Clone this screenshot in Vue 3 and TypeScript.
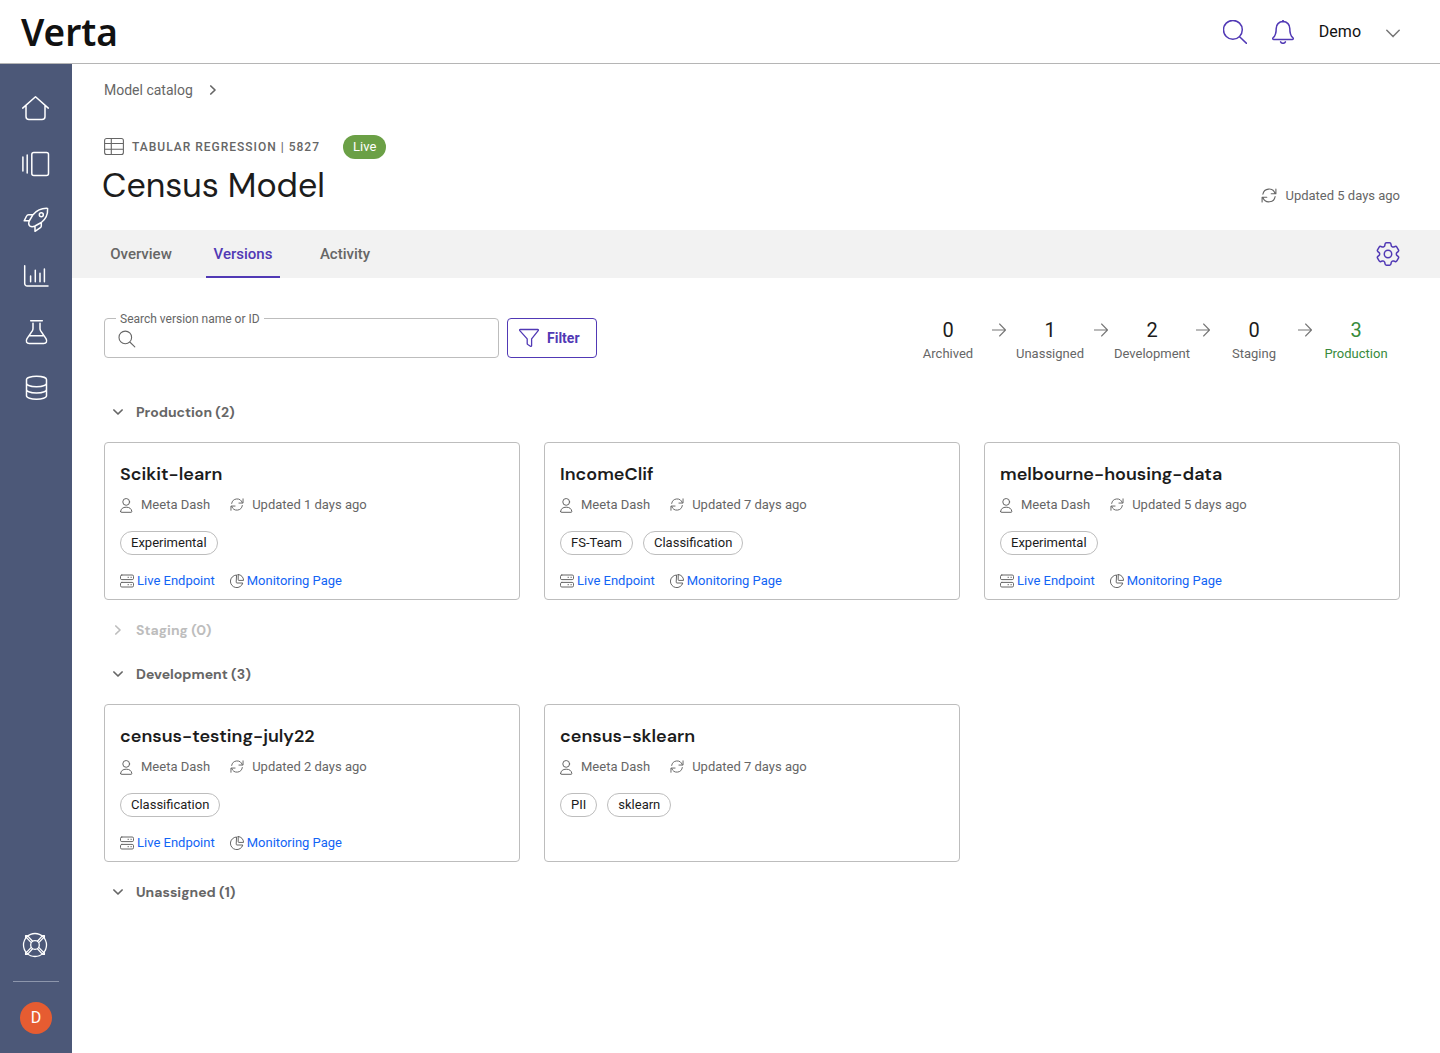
<script setup lang="ts">
import { h, ref, type FunctionalComponent } from 'vue'

interface IconShape {
  box: string
  width: number
  height: number
  d: string
  stroke?: number
}

interface Version {
  name: string
  owner: string
  updated: string
  tags: string[]
  live: boolean
}

interface StageGroup {
  title: string
  open: boolean
  empty?: boolean
  versions: Version[]
}

const icons: Record<string, IconShape> = {
  home: {
    box: '0 0 28 28', width: 28, height: 28,
    d: 'M.7 14.1 13.5 2.8l12.8 11.3M4 11.5V22.5a3 3 0 0 0 3 3h13a3 3 0 0 0 3-3V11.5',
  },
  catalog: {
    box: '0 0 28 28', width: 28, height: 28,
    d: 'M.9 7v14M5.2 5v18M11.8 2.5h12.7a2 2 0 0 1 2 2v19a2 2 0 0 1-2 2H11.8a2 2 0 0 1-2-2v-19a2 2 0 0 1 2-2Z',
  },
  rocket: {
    box: '0 0 28 28', width: 28, height: 28,
    d: 'M25.6 2.4C18.5 2 14.2 5 11 8.7L7.5 14.5C6.3 17 6.6 19 8 20.1c1.4 1 3 .8 5-.1l6.3-3.5C24 13 26 9 25.6 2.4ZM11 8.7H6.6c-1 0-1.6.4-2 1.3L2.2 14.8h5.2M19.3 16.5v3.6c0 .7-.3 1.2-.9 1.5L13 25.3V20M21.3 8.7a2 2 0 1 1-4 0 2 2 0 0 1 4 0Z',
  },
  chart: {
    box: '0 0 28 28', width: 28, height: 28,
    d: 'M2.7 3.7v17.8a2.5 2.5 0 0 0 2.5 2.5H26M8.6 14v5.7M13.3 8.3v11.4M18 11.3v8.4M22.4 7v12.7',
  },
  flask: {
    box: '0 0 28 28', width: 28, height: 28,
    d: 'M8.7 2.7h11.6M11 5.3v5.2c0 .8-.2 1.6-.7 2.4L5 20.7c-1.6 2.7-.3 4.8 2.3 4.8h14.4c2.6 0 3.9-2.1 2.3-4.8l-5.3-7.8c-.5-.8-.7-1.6-.7-2.4V5.3M7 17.7h15',
  },
  database: {
    box: '0 0 28 28', width: 28, height: 28,
    d: 'M4.5 5.6c0-1.9 4.5-3.3 10-3.3s10 1.4 10 3.3v16.2c0 2-4.5 3.5-10 3.5s-10-1.5-10-3.5ZM4.5 9.3c0 2 4.5 3.4 10 3.4s10-1.4 10-3.4M4.5 15.6c0 2 4.5 3.4 10 3.4s10-1.4 10-3.4',
  },
  lifebuoy: {
    box: '1 0 28 28', width: 28, height: 28,
    d: 'M25.5 14a11.5 11.5 0 1 1-23 0 11.5 11.5 0 0 1 23 0ZM18.3 14a4.3 4.3 0 1 1-8.6 0 4.3 4.3 0 0 1 8.6 0ZM4.6 6.4V4.6h1.8L11.6 10.2M4.6 5.6 10.2 11.6M23.4 6.4V4.6h-1.8L16.4 10.2M23.4 5.6 17.8 11.6M4.6 21.6v1.8h1.8L11.6 17.8M4.6 22.4 10.2 16.4M23.4 21.6v1.8h-1.8L16.4 17.8M23.4 22.4 17.8 16.4',
    stroke: 1.3,
  },
  search: {
    box: '0 0 24 24', width: 24, height: 24,
    d: 'M19.3 9.8a9.4 9.4 0 1 1-18.8 0 9.4 9.4 0 0 1 18.8 0ZM16.6 16.7l7 6.8',
  },
  bell: {
    box: '0 0 24 24', width: 24, height: 24,
    d: 'M12 .6v1M12 1.6c-4.2 0-6.8 3.1-6.8 6.8 0 5.3-.8 7.3-2.9 9.1-1 .9-.6 2 .5 2h18.4c1.1 0 1.5-1.1.5-2-2.1-1.8-2.9-3.8-2.9-9.1 0-3.7-2.6-6.8-6.8-6.8ZM9.6 21.9c.5 1 1.4 1.4 2.4 1.4s1.9-.4 2.4-1.4',
  },
  wideChevron: { box: '0 0 14 14', width: 14, height: 14, d: 'M.8 5.2 7 11.6l6.2-6.4', stroke: 1.5 },
  chevronRight: { box: '0 0 12 12', width: 12, height: 12, d: 'M3.8 2 8 6l-4.2 4', stroke: 1.7 },
  chevronDown: { box: '0 0 12 12', width: 12, height: 12, d: 'M1.9 4 6 8l4.1-4', stroke: 1.7 },
  table: {
    box: '0 0 20 20', width: 20, height: 20,
    d: 'M2.6 1.5h14.8a2 2 0 0 1 2 2v12a2 2 0 0 1-2 2H2.6a2 2 0 0 1-2-2v-12a2 2 0 0 1 2-2ZM7.3 1.5v16M.6 6.5h18.8M.6 12.2h18.8',
    stroke: 1.1,
  },
  refresh: {
    box: '0 0 16 16', width: 16, height: 16,
    d: 'M1.9 6.2A6.3 6.3 0 0 1 14 5.2M14.9 1v4.8H10.2M14.1 8.6A6.3 6.3 0 0 1 2 9.8M1.1 14v-4.8H5.8',
    stroke: 1.1,
  },
  gear: {
    box: '2.3 2.3 19.4 19.4', width: 24, height: 24,
    d: 'M9.594 3.94c.09-.542.56-.94 1.11-.94h2.593c.55 0 1.02.398 1.11.94l.213 1.281c.063.374.313.686.645.87.074.04.147.083.22.127.325.196.72.257 1.075.124l1.217-.456a1.125 1.125 0 0 1 1.37.49l1.296 2.247a1.125 1.125 0 0 1-.26 1.431l-1.003.827c-.293.241-.438.613-.43.992a7.723 7.723 0 0 1 0 .255c-.008.378.137.75.43.991l1.004.827c.424.35.534.955.26 1.43l-1.298 2.247a1.125 1.125 0 0 1-1.369.491l-1.217-.456c-.355-.133-.75-.072-1.076.124a6.47 6.47 0 0 1-.22.128c-.331.183-.581.495-.644.869l-.213 1.281c-.09.543-.56.94-1.11.94h-2.594c-.55 0-1.019-.398-1.11-.94l-.213-1.281c-.062-.374-.312-.686-.644-.87a6.52 6.52 0 0 1-.22-.127c-.325-.196-.72-.257-1.076-.124l-1.217.456a1.125 1.125 0 0 1-1.369-.49l-1.297-2.247a1.125 1.125 0 0 1 .26-1.431l1.004-.827c.292-.24.437-.613.43-.991a6.932 6.932 0 0 1 0-.255c.007-.38-.138-.751-.43-.992l-1.004-.827a1.125 1.125 0 0 1-.26-1.43l1.297-2.247a1.125 1.125 0 0 1 1.37-.491l1.216.456c.356.133.751.072 1.076-.124.072-.044.146-.086.22-.128.332-.183.582-.495.644-.869l.214-1.28ZM15 12a3 3 0 1 1-6 0 3 3 0 0 1 6 0Z',
    stroke: 1.2,
  },
  smallSearch: {
    box: '0 0 18 18', width: 18, height: 18,
    d: 'M13.6 7.4a6.3 6.3 0 1 1-12.6 0 6.3 6.3 0 0 1 12.6 0ZM11.8 12l5 4.8',
    stroke: 1.1,
  },
  funnel: {
    box: '0 0 20 20', width: 20, height: 20,
    d: 'M1.3 1.5h17.4c.7 0 .9.6.5 1.1l-6.6 8.3v6.5c0 .9-.5 1.3-1.2.9l-2.6-1.8c-.4-.3-.6-.6-.6-1.1v-4.5L.8 2.6c-.4-.5-.2-1.1.5-1.1Z',
    stroke: 1.3,
  },
  arrow: { box: '0 0 14 14', width: 14, height: 14, d: 'M0 7h13.4M7.6 1l5.9 6-5.9 6', stroke: 1.1 },
  user: {
    box: '0 0 13 15', width: 13, height: 15,
    d: 'M9.6 3.9a3.4 3.4 0 1 1-6.8 0 3.4 3.4 0 0 1 6.8 0ZM.6 13.6c.2-2.9 2.3-4.4 5.6-4.4s5.4 1.5 5.6 4.4c0 .5-.2.7-.6.7H1.2c-.4 0-.6-.2-.6-.7Z',
    stroke: 1,
  },
  server: {
    box: '0 0 14 14', width: 14, height: 14,
    d: 'M1.8 1h10.4a1.3 1.3 0 0 1 1.3 1.3v2a1.3 1.3 0 0 1-1.3 1.3H1.8A1.3 1.3 0 0 1 .5 4.3v-2A1.3 1.3 0 0 1 1.8 1ZM1.8 8.4h10.4a1.3 1.3 0 0 1 1.3 1.3v2a1.3 1.3 0 0 1-1.3 1.3H1.8a1.3 1.3 0 0 1-1.3-1.3v-2a1.3 1.3 0 0 1 1.3-1.3ZM8 3.3h.5M10.9 3.3h.5M8 10.7h.5M10.9 10.7h.5',
    stroke: 1,
  },
  pie: {
    box: '0 0 14 14', width: 14, height: 14,
    d: 'M6.2 1A6.3 6.3 0 1 0 12.8 9H6.9c-.5 0-.7-.3-.7-.7ZM8.2.5v5.3c0 .4.2.6.6.6h4.8C13.4 3.2 11.4.8 8.2.5Z',
    stroke: 1,
  },
}

const Icon: FunctionalComponent<{ name: string }> = (props) => {
  const icon = icons[props.name]
  return h('svg', {
    class: 'icon',
    viewBox: icon.box,
    width: icon.width,
    height: icon.height,
    fill: 'none',
    stroke: 'currentColor',
    'stroke-width': icon.stroke ?? 1.5,
    'stroke-linecap': 'round',
    'stroke-linejoin': 'round',
    'aria-hidden': 'true',
  }, [h('path', { d: icon.d })])
}
Icon.props = ['name']

const navItems = [
  { icon: 'home', label: 'Home' },
  { icon: 'catalog', label: 'Catalog' },
  { icon: 'rocket', label: 'Deployments' },
  { icon: 'chart', label: 'Monitoring' },
  { icon: 'flask', label: 'Experiments' },
  { icon: 'database', label: 'Datasets' },
]

const tabs = ['Overview', 'Versions', 'Activity']
const activeTab = ref('Versions')
const query = ref('')

const stages = [
  { label: 'Archived', count: 0 },
  { label: 'Unassigned', count: 1 },
  { label: 'Development', count: 2 },
  { label: 'Staging', count: 0 },
  { label: 'Production', count: 3 },
]

const groups = ref<StageGroup[]>([
  {
    title: 'Production (2)',
    open: true,
    versions: [
      { name: 'Scikit-learn', owner: 'Meeta Dash', updated: 'Updated 1 days ago', tags: ['Experimental'], live: true },
      { name: 'IncomeClif', owner: 'Meeta Dash', updated: 'Updated 7 days ago', tags: ['FS-Team', 'Classification'], live: true },
      { name: 'melbourne-housing-data', owner: 'Meeta Dash', updated: 'Updated 5 days ago', tags: ['Experimental'], live: true },
    ],
  },
  { title: 'Staging (0)', open: false, empty: true, versions: [] },
  {
    title: 'Development (3)',
    open: true,
    versions: [
      { name: 'census-testing-july22', owner: 'Meeta Dash', updated: 'Updated 2 days ago', tags: ['Classification'], live: true },
      { name: 'census-sklearn', owner: 'Meeta Dash', updated: 'Updated 7 days ago', tags: ['PII', 'sklearn'], live: false },
    ],
  },
  { title: 'Unassigned (1)', open: true, versions: [] },
])
</script>

<template>
  <div class="app">
    <header class="topbar">
      <a class="logo" href="#">Verta</a>
      <div class="topbar-actions">
        <button class="plain accent" type="button" aria-label="Search"><Icon name="search" /></button>
        <button class="plain accent" type="button" aria-label="Notifications"><Icon name="bell" /></button>
        <button class="plain account" type="button">Demo <Icon name="wideChevron" /></button>
      </div>
    </header>

    <div class="body">
      <aside class="sidebar">
        <nav class="side-nav" aria-label="Main">
          <a v-for="item in navItems" :key="item.icon" class="side-link" href="#" :aria-label="item.label">
            <Icon :name="item.icon" />
          </a>
        </nav>
        <div class="side-foot">
          <a class="help" href="#" aria-label="Help"><Icon name="lifebuoy" /></a>
          <button class="avatar" type="button" aria-label="D, account">D</button>
        </div>
      </aside>

      <main class="main">
        <section class="model-head">
          <nav class="crumbs" aria-label="Breadcrumb">
            <a href="#">Model catalog</a>
            <Icon name="chevronRight" />
          </nav>
          <div class="kind">
            <Icon name="table" />
            <span class="kind-text">TABULAR REGRESSION | 5827</span>
            <span class="live">Live</span>
          </div>
          <div class="title-row">
            <h1>Census Model</h1>
            <p class="updated"><Icon name="refresh" />Updated 5 days ago</p>
          </div>
        </section>

        <div class="tabbar">
          <div class="tabs" role="tablist">
            <div v-for="tab in tabs" :key="tab" class="tab-slot" role="presentation">
              <button
                class="tab"
                :class="{ active: tab === activeTab }"
                type="button"
                role="tab"
                :aria-selected="tab === activeTab"
                @click="activeTab = tab"
              >{{ tab }}</button>
            </div>
          </div>
          <button class="plain accent" type="button" aria-label="Settings"><Icon name="gear" /></button>
        </div>

        <div class="content">
          <div class="toolbar">
            <div class="search">
              <label for="version-search">Search version name or ID</label>
              <Icon name="smallSearch" />
              <input id="version-search" v-model="query" type="text" />
            </div>
            <button class="filter" type="button"><Icon name="funnel" />Filter</button>
            <ol class="stages">
              <template v-for="(stage, i) in stages" :key="stage.label">
                <li v-if="i > 0" class="stage-arrow" aria-hidden="true"><Icon name="arrow" /></li>
                <li class="stage" :class="{ current: i === stages.length - 1 }">
                  <span class="count">{{ stage.count }}</span>
                  <span class="stage-name">{{ stage.label }}</span>
                </li>
              </template>
            </ol>
          </div>

          <section v-for="group in groups" :key="group.title">
            <h2>
              <button
                class="group-toggle"
                :class="{ empty: group.empty }"
                type="button"
                :aria-expanded="group.open"
                @click="group.open = !group.open"
              >
                <Icon :name="group.open ? 'chevronDown' : 'chevronRight'" />{{ group.title }}
              </button>
            </h2>
            <div v-if="group.open && group.versions.length" class="cards">
              <article v-for="version in group.versions" :key="version.name" class="card">
                <h3>{{ version.name }}</h3>
                <p class="meta">
                  <span class="owner"><Icon name="user" />{{ version.owner }}</span>
                  <span class="when"><Icon name="refresh" />{{ version.updated }}</span>
                </p>
                <ul class="tags">
                  <li v-for="tag in version.tags" :key="tag">{{ tag }}</li>
                </ul>
                <div v-if="version.live" class="links">
                  <a href="#"><Icon name="server" />Live Endpoint</a>
                  <a href="#"><Icon name="pie" />Monitoring Page</a>
                </div>
              </article>
            </div>
          </section>
        </div>
      </main>
    </div>
  </div>
</template>

<style>
body {
  margin: 0;
  background: #fff;
}
</style>

<style scoped>
.app {
  --accent: #5139b5;
  --muted: #666;
  --line: #bdbdbd;
  --ink: #1c1c1c;
  --display: "DM Sans", Inter, sans-serif;
  display: flex;
  flex-direction: column;
  min-height: 100vh;
  color: var(--ink);
  font-family: Roboto, sans-serif;
  font-size: 13px;
  line-height: 16px;
}

.app * {
  box-sizing: border-box;
}

.icon {
  display: block;
  flex: none;
}

h1, h2, h3, p, ul, ol {
  margin: 0;
  padding: 0;
  list-style: none;
}

h2 {
  font-size: 14px;
}

a {
  color: inherit;
  text-decoration: none;
}

button {
  font: inherit;
  cursor: pointer;
}

.plain {
  display: flex;
  align-items: center;
  padding: 0;
  border: 0;
  background: none;
}

.accent {
  color: var(--accent);
}

/* Top bar */
.topbar {
  display: flex;
  align-items: center;
  justify-content: space-between;
  height: 64px;
  padding: 0 40px 0 21px;
  border-bottom: 1px solid #b5b5b5;
}

.logo {
  color: #111;
  font-family: "Noto Sans", sans-serif;
  font-size: 37px;
  font-weight: 600;
  line-height: 50px;
}

.topbar-actions {
  display: flex;
  align-items: center;
  gap: 24px;
}

.account {
  gap: 25px;
  color: #111;
  font-size: 16px;
  line-height: 24px;
}

.account .icon {
  color: #777;
}

/* Sidebar */
.body {
  display: flex;
  flex: 1;
}

.sidebar {
  display: flex;
  flex: none;
  flex-direction: column;
  justify-content: space-between;
  width: 72px;
  padding: 16px 0 19px;
  background: #4c5878;
  color: #fff;
}

.side-link {
  display: flex;
  align-items: center;
  justify-content: center;
  height: 56px;
}

.side-foot {
  display: flex;
  flex-direction: column;
  align-items: center;
}

.help {
  display: flex;
  justify-content: center;
  width: 46px;
  padding-bottom: 22px;
  border-bottom: 1px solid #8d96ac;
}

.avatar {
  width: 32px;
  height: 32px;
  margin-top: 20px;
  padding: 0;
  border: 0;
  border-radius: 50%;
  background: #e65c31;
  color: #fff;
  font-size: 16px;
}

/* Model heading */
.main {
  flex: 1;
  min-width: 0;
}

.model-head {
  padding: 14px 40px 22px 32px;
}

.crumbs {
  display: flex;
  align-items: center;
  gap: 14px;
  color: var(--muted);
  font-size: 14px;
  line-height: 24px;
}

.kind {
  display: flex;
  align-items: center;
  gap: 8px;
  height: 24px;
  margin-top: 33px;
  color: var(--muted);
}

.kind-text {
  font-size: 12px;
  font-weight: 500;
  letter-spacing: 1px;
}

.live {
  margin-left: 15px;
  padding: 0 10px;
  border-radius: 12px;
  background: #6ba046;
  color: #fff;
  line-height: 24px;
}

.title-row {
  display: flex;
  align-items: flex-end;
  justify-content: space-between;
  margin-top: 5px;
}

h1 {
  margin-left: -2px;
  font-family: var(--display);
  font-size: 34px;
  font-weight: 400;
  line-height: 44px;
}

.updated {
  display: flex;
  align-items: center;
  gap: 8px;
  margin-bottom: 4px;
  color: var(--muted);
}

/* Tabs */
.tabbar {
  display: flex;
  align-items: center;
  justify-content: space-between;
  height: 48px;
  padding: 0 40px 0 18px;
  background: #f2f2f2;
}

.tabs {
  display: flex;
}

.tab-slot {
  display: flex;
  justify-content: center;
  width: 102px;
}

.tab {
  height: 48px;
  padding: 0 8px;
  border: 0;
  border-top: 2px solid transparent;
  border-bottom: 2px solid transparent;
  background: none;
  color: var(--muted);
  font-size: 15px;
  font-weight: 500;
}

.tab.active {
  border-bottom-color: var(--accent);
  color: var(--accent);
}

/* Search, filter and stage counts */
.content {
  padding: 40px 40px 32px 32px;
}

.toolbar {
  display: flex;
  align-items: flex-start;
  gap: 8px;
  height: 40px;
  margin-bottom: 32px;
}

.search {
  position: relative;
  display: flex;
  flex: 0 1 395px;
  align-items: center;
  gap: 8px;
  height: 40px;
  padding: 2px 13px 0;
  border: 1px solid var(--line);
  border-radius: 4px;
  color: var(--muted);
}

.search label {
  position: absolute;
  top: -8px;
  left: 11px;
  padding: 0 4px;
  background: #fff;
  font-size: 12px;
}

.search input {
  flex: 1;
  min-width: 0;
  padding: 0;
  border: 0;
  outline: 0;
  background: none;
  color: var(--ink);
  font: inherit;
}

.filter {
  display: flex;
  align-items: center;
  gap: 8px;
  height: 40px;
  padding: 0 16px 0 11px;
  border: 1px solid var(--accent);
  border-radius: 4px;
  background: #fff;
  color: var(--accent);
  font-size: 14px;
  font-weight: 700;
}

.stages {
  display: flex;
  margin-left: auto;
}

.stage {
  display: flex;
  flex-direction: column;
  align-items: center;
  width: 88px;
}

.stage-arrow {
  display: flex;
  align-items: center;
  width: 14px;
  height: 24px;
  color: #777;
}

.count {
  font-size: 20px;
  line-height: 24px;
}

.stage-name {
  margin-top: 4px;
  color: var(--muted);
}

.current,
.current .stage-name {
  color: #388a3c;
}

/* Version groups */
.group-toggle {
  display: flex;
  align-items: center;
  gap: 12px;
  height: 44px;
  padding: 0 8px;
  border: 0;
  background: none;
  color: var(--muted);
  font-family: var(--display);
  font-size: 14px;
  font-weight: 700;
}

.group-toggle.empty {
  color: #bdbdbd;
}

.cards {
  display: grid;
  grid-template-columns: repeat(3, minmax(0, 1fr));
  gap: 24px;
  margin: 8px 0;
}

.card {
  padding: 19px 15px 10px;
  border: 1px solid var(--line);
  border-radius: 4px;
}

h3 {
  font-family: var(--display);
  font-size: 18px;
  font-variation-settings: "opsz" 24;
  font-weight: 600;
  line-height: 24px;
}

.meta {
  display: flex;
  gap: 20px;
  margin-top: 11px;
  color: var(--muted);
}

.owner,
.when {
  display: flex;
  align-items: center;
  gap: 8px;
}

.when .icon {
  width: 14px;
  height: 14px;
}

.tags {
  display: flex;
  gap: 10px;
  margin-top: 18px;
}

.tags li {
  padding: 0 10px;
  border: 1px solid var(--line);
  border-radius: 12px;
  line-height: 22px;
}

.links {
  display: flex;
  gap: 15px;
  margin-top: 18px;
  color: #1264f5;
}

.links a {
  display: flex;
  align-items: center;
  gap: 3px;
}

.links .icon {
  color: var(--muted);
}
</style>
